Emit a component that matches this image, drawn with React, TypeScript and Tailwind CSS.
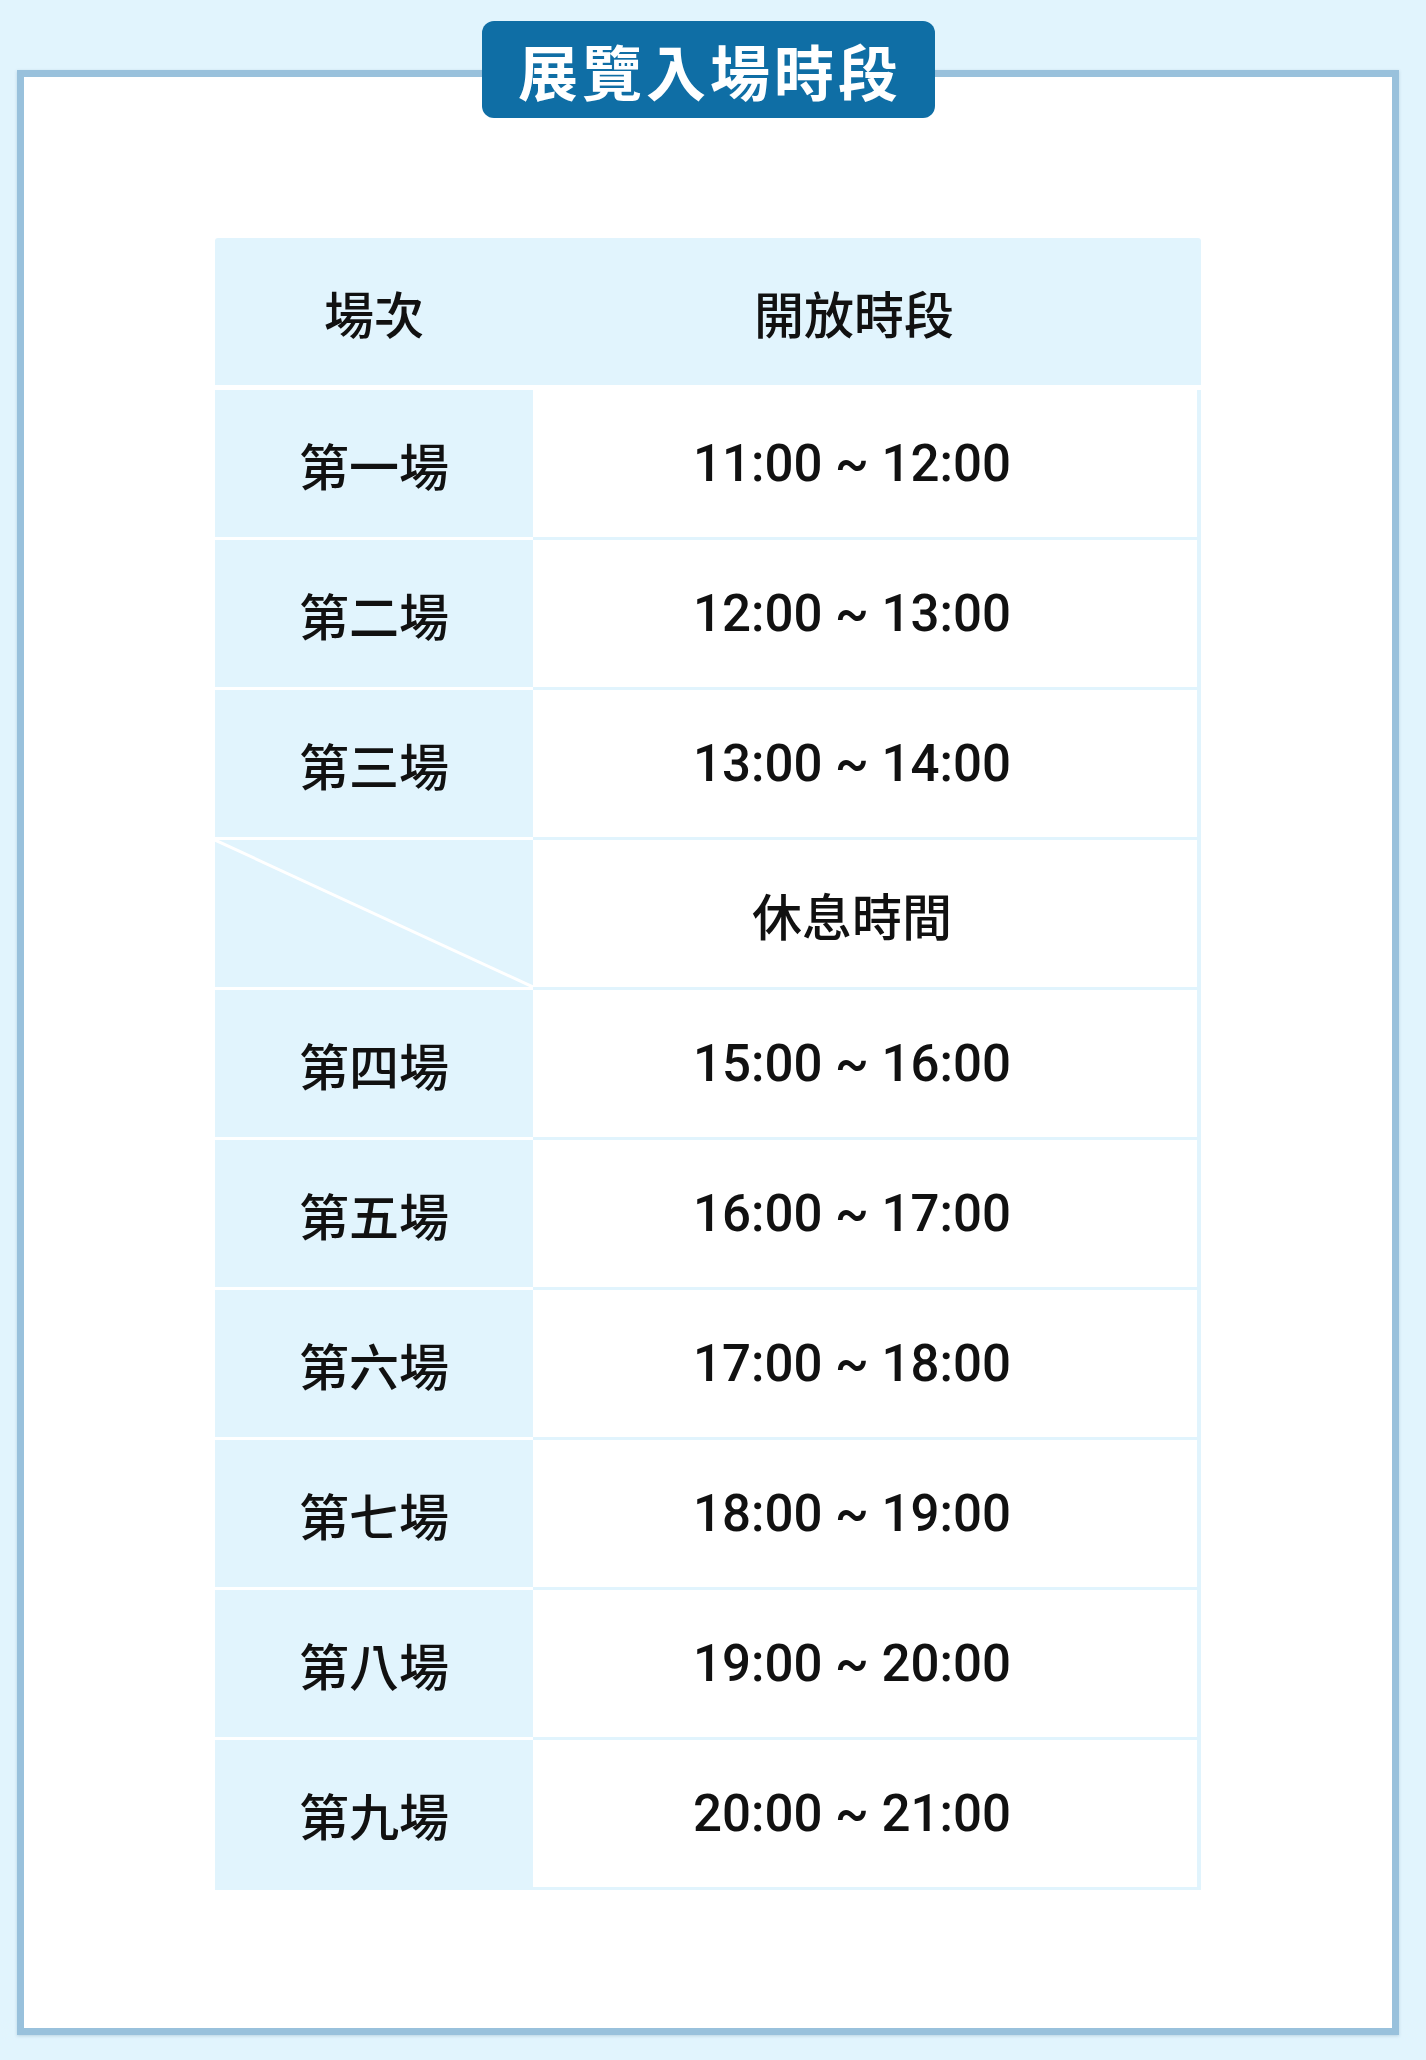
const SESSIONS: { label: string; time: string }[] = [
  { label: "第一場", time: "11:00 ~ 12:00" },
  { label: "第二場", time: "12:00 ~ 13:00" },
  { label: "第三場", time: "13:00 ~ 14:00" },
  { label: "", time: "休息時間" },
  { label: "第四場", time: "15:00 ~ 16:00" },
  { label: "第五場", time: "16:00 ~ 17:00" },
  { label: "第六場", time: "17:00 ~ 18:00" },
  { label: "第七場", time: "18:00 ~ 19:00" },
  { label: "第八場", time: "19:00 ~ 20:00" },
  { label: "第九場", time: "20:00 ~ 21:00" },
];

const FONT = "font-['Noto_Sans_CJK_TC','Noto_Sans',sans-serif]";

function SessionRow({ label, time, last }: { label: string; time: string; last: boolean }) {
  const isBreak = label === "";
  return (
    <div className="grid grid-cols-[318px_1fr]">
      <div
        className={`relative flex h-[150px] items-center justify-center border-b-[3px] bg-[#e1f4fd] ${
          last ? "border-[#e1f4fd]" : "border-white"
        }`}
      >
        {isBreak ? (
          <svg className="absolute inset-0 h-full w-full" preserveAspectRatio="none" viewBox="0 0 318 147">
            <line x1="0" y1="0" x2="318" y2="147" stroke="#ffffff" strokeWidth="3" />
          </svg>
        ) : (
          <span className="text-[50px] font-medium leading-none text-[#111]">{label}</span>
        )}
      </div>
      <div className="flex h-[150px] items-center justify-center border-r-[4px] border-b-[3px] border-[#e1f4fd] bg-white pr-[26px]">
        {isBreak ? (
          <span className="text-[50px] font-medium leading-none text-[#111]">{time}</span>
        ) : (
          <span className="font-['Roboto','Noto_Sans',sans-serif] text-[51px] font-medium leading-none text-[#111]">
            {time}
          </span>
        )}
      </div>
    </div>
  );
}

export default function App() {
  return (
    <div className={`min-h-[2060px] w-[1426px] bg-[#e1f4fd] pt-[21px] pb-[23px] ${FONT}`}>
      <div className="ml-[17px] w-[1382px]">
        <div className="relative z-10 mx-auto flex h-[97px] w-[453px] items-center justify-center rounded-[12px] bg-[#0f6ea5]">
          <span className="pl-[4px] text-[60px] font-bold leading-none tracking-[4px] text-white">展覽入場時段</span>
        </div>
        <div className="-mt-[48px] border-[7px] border-[#99c1dc] bg-white pt-[161px] pb-[138px] shadow-[0_1px_3px_rgba(80,120,150,0.25)]">
          <div className="mx-auto w-[986px]">
            <div className="grid h-[147px] grid-cols-[318px_1fr] rounded-t-[3px] bg-[#e1f4fd]">
              <div className="flex items-center justify-center">
                <span className="text-[50px] font-medium leading-none text-[#111]">場次</span>
              </div>
              <div className="flex items-center justify-center pr-[26px]">
                <span className="text-[50px] font-medium leading-none text-[#111]">開放時段</span>
              </div>
            </div>
            <div className="h-[5px] bg-white" />
            {SESSIONS.map((s, i) => (
              <SessionRow key={i} label={s.label} time={s.time} last={i === SESSIONS.length - 1} />
            ))}
          </div>
        </div>
      </div>
    </div>
  );
}
